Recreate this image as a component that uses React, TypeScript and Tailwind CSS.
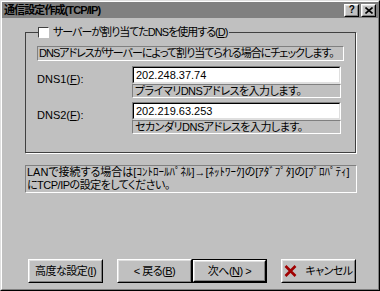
import React from 'react';

const font = "font-['Liberation_Sans','Noto_Sans_CJK_JP',sans-serif] [font-feature-settings:'palt'] tracking-[-0.5px]";

const Raised = ({ className = '', children }: { className?: string; children?: React.ReactNode }) => (
  <div className={`border border-t-white border-l-white border-r-black border-b-black ${className}`}>
    <div className="w-full h-full border border-t-[#dfdfdf] border-l-[#dfdfdf] border-r-[#808080] border-b-[#808080] flex items-center justify-center">
      {children}
    </div>
  </div>
);

const Sunken = ({ className = '', children }: { className?: string; children?: React.ReactNode }) => (
  <div className={`border border-t-[#808080] border-l-[#808080] border-r-white border-b-white ${className}`}>
    {children}
  </div>
);

const Button = ({ children, isDefault = false }: { children: React.ReactNode; isDefault?: boolean }) => (
  <div className={`w-[75px] h-[24px] ${isDefault ? 'border border-black' : ''}`}>
    <Raised className="w-full h-full">
      <span className="text-[11px] text-black leading-none flex items-center whitespace-nowrap">{children}</span>
    </Raised>
  </div>
);

const DnsRow = ({ label, mnemonic, value, hint }: { label: string; mnemonic: string; value: string; hint: string }) => (
  <div className="flex">
    <div className="w-[95px] pt-[5px] text-[11px] tracking-normal">
      {label}(<u>{mnemonic}</u>):
    </div>
    <div className="w-[209px] flex flex-col">
      <div className="h-[18px] border border-t-[#808080] border-l-[#808080] border-r-white border-b-[#dfdfdf]">
        <div className="h-full bg-white border border-t-black border-l-black border-r-[#dfdfdf] border-b-[#dfdfdf] px-[2px] text-[11px] leading-[15px] tracking-normal">
          {value}
        </div>
      </div>
      <Sunken className="h-[14px] px-[2px] text-[11px] leading-[12px] whitespace-nowrap">{hint}</Sunken>
    </div>
  </div>
);

export default function App() {
  return (
    <div className={`w-[380px] h-[291px] bg-[#c0c0c0] text-black ${font} border border-t-[#dfdfdf] border-l-[#dfdfdf] border-r-black border-b-black`}>
      <div className="w-full h-full border border-t-white border-l-white border-r-[#808080] border-b-[#808080] flex flex-col">
        {/* title bar */}
        <div className="h-[16px] bg-[#808080] flex items-center pl-[2px] pr-[2px]">
          <span className="text-[11px] font-bold leading-none flex-1 tracking-[-0.9px]">通信設定作成(TCP/IP)</span>
          <Raised className="w-[15px] h-[13px] bg-[#c0c0c0]">
            <span className="text-[10px] font-bold leading-none">?</span>
          </Raised>
          <Raised className="w-[15px] h-[13px] bg-[#c0c0c0] ml-[2px]">
            <svg width="8" height="7" viewBox="0 0 8 7">
              <path d="M0.5 0.5 L7.5 6.5 M7.5 0.5 L0.5 6.5" stroke="black" strokeWidth="1.6" />
            </svg>
          </Raised>
        </div>

        {/* group box */}
        <fieldset className="mt-[8px] ml-[23px] w-[331px] h-[127px] border border-[#404040] shadow-[1px_1px_0_#fff] px-[11px]">
          <legend className="ml-[1px] pr-[2px] flex items-center text-[11px] leading-[13px] tracking-[-1px] whitespace-nowrap">
            <span className="w-[11px] h-[11px] bg-white border border-t-[#404040] border-l-[#404040] border-r-white border-b-white mr-[4px]" />
            サーバーが割り当てたDNSを使用する(<u>D</u>)
          </legend>
          <Sunken className="mt-[7px] h-[15px] px-[1px] text-[11px] leading-[13px] tracking-[-1px] whitespace-nowrap overflow-hidden">
            DNSアドレスがサーバーによって割り当てられる場合にチェックします。
          </Sunken>
          <div className="mt-[5px] flex flex-col gap-[4px]">
            <DnsRow label="DNS1" mnemonic="F" value="202.248.37.74" hint="プライマリDNSアドレスを入力します。" />
            <DnsRow label="DNS2" mnemonic="F" value="202.219.63.253" hint="セカンダリDNSアドレスを入力します。" />
          </div>
        </fieldset>

        {/* info */}
        <Sunken className="mt-[12px] ml-[23px] w-[332px] h-[28px] px-[1px] text-[11px] leading-[13px] tracking-normal whitespace-nowrap">
          <div>LANで接続する場合は[ｺﾝﾄﾛｰﾙﾊﾟﾈﾙ]→[ﾈｯﾄﾜｰｸ]の[ｱﾀﾞﾌﾟﾀ]の[ﾌﾟﾛﾊﾟﾃｨ]</div>
          <div className="tracking-[-0.5px]">にTCP/IPの設定をしてください。</div>
        </Sunken>

        {/* buttons */}
        <div className="mt-auto mb-[6px] flex ml-[26px]">
          <Button>高度な設定(<u>I</u>)</Button>
          <div className="ml-[14px]">
            <Button>&lt;&nbsp;戻る(<u>B</u>)</Button>
          </div>
          <Button isDefault>次へ(<u>N</u>)&nbsp;&gt;</Button>
          <div className="ml-[14px]">
            <Button>
              <svg width="13" height="12" viewBox="0 0 13 12" className="mr-[8px]">
                <path d="M1.5 1 L11.5 11 M11.5 1 L1.5 11" stroke="#a00000" strokeWidth="2.6" />
              </svg>
              キャンセル
            </Button>
          </div>
        </div>
      </div>
    </div>
  );
}
